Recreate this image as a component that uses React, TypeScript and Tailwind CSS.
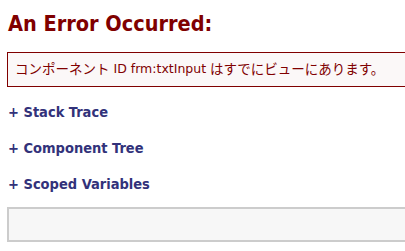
export default function App() {
  const links = ['Stack Trace', 'Component Tree', 'Scoped Variables']

  return (
    <div
      className="w-[405px] h-[251px] overflow-hidden bg-white pl-[7px]"
      style={{ fontFamily: '"DejaVu Sans Condensed", "DejaVu Sans", "Noto Sans CJK JP", sans-serif' }}
    >
      <h1 className="pt-[11px] pl-px text-[21.5px] leading-[26px] font-bold text-[#800000]">An Error Occurred:</h1>
      <div className="mt-[15px] w-[420px] h-[35px] border border-[#800000] bg-[#fbf8f8] pl-[7px] flex items-center text-[13.5px] text-[#800000]">
        <span>コンポーネント</span>
        <span className="font-['DejaVu_Sans'] text-[12.5px] px-[4px]">ID frm:txtInput</span>
        <span>はすでにビューにあります。</span>
      </div>
      <div className="mt-[16px] flex flex-col gap-[18px] pl-px">
        {links.map((l) => (
          <div key={l} className="text-[14.5px] leading-[18px] font-bold text-[#32327a]">
            + {l}
          </div>
        ))}
      </div>
      <div className="mt-[14px] w-[420px] h-[35px] border-2 border-[#cccccc] bg-[#f7f7f7]" />
    </div>
  )
}
